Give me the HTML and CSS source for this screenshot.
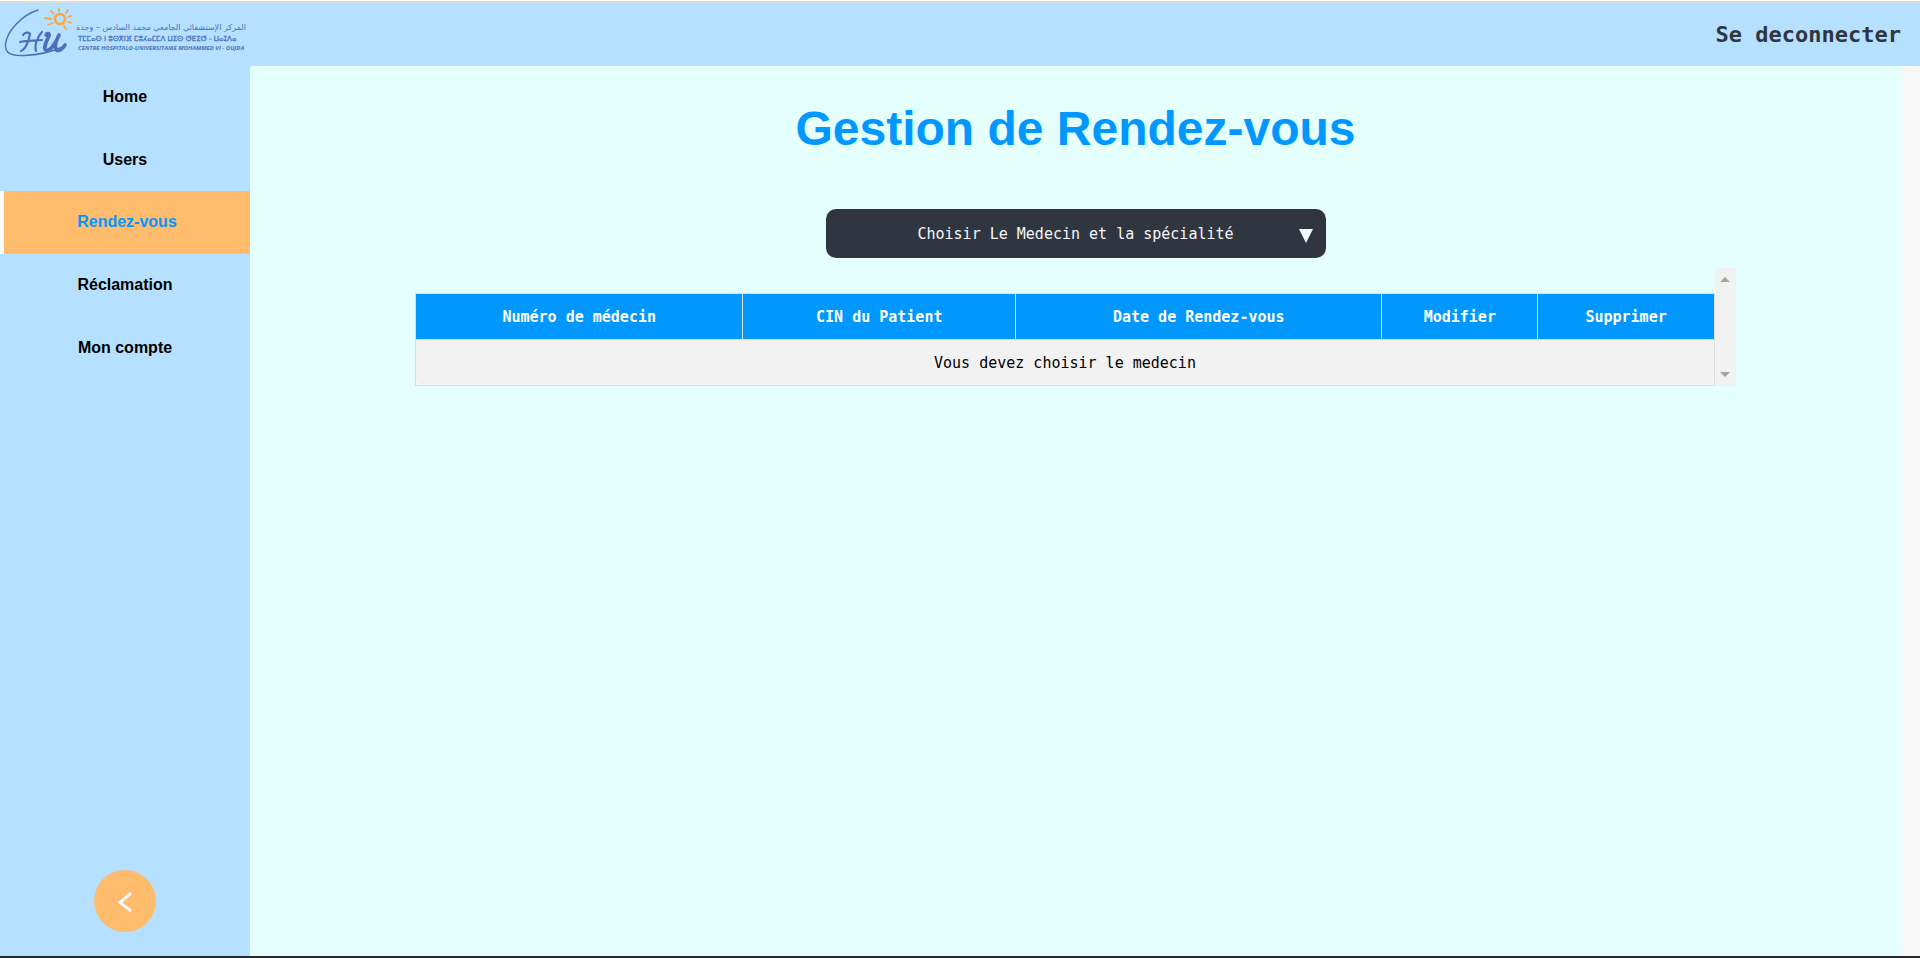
FILE: index.html
```html
<!DOCTYPE html>
<html lang="fr">
<head>
<meta charset="utf-8">
<title>Gestion de Rendez-vous</title>
<link rel="stylesheet" href="styles.css">
</head>
<body>
<header class="topbar">
  <a class="brand" href="#" aria-label="CHU Mohammed VI Oujda">
    <svg class="logo" viewBox="0 5 250 60" width="250" height="60" aria-hidden="true">
      <g fill="none" stroke="#4a72b8" stroke-linecap="round" stroke-linejoin="round">
        <path stroke-width="1.400" d="M38 10C22 15 7 31 5.500 44C4.500 54 12 56 24 55.500C38 55 54 51 65 46"/>
        <path stroke-width="2.200" d="M23 35C25 32 30 32 30 34C29 40 26 49 21 51M42 32C38 36 34 45 36 51M20 42C27 40 34 41 42 40"/>
        <path stroke-width="3.600" d="M46 35C47 33 50 33 49 36C46 42 43 48 46 50.500C50 51.500 56 43 59 35C56 41 54 48 57 50.500C60 51 63 48 65 45"/>
      </g>
      <g fill="none" stroke="#fba73c" stroke-linecap="round">
        <circle cx="60" cy="19" r="5" stroke-width="2.600"/>
        <path stroke-width="1.800" d="M59 9V11M51 11L53.500 13.500M68 10L66 13M45 18L51 19M48 25L53 23M68.500 17L71 16M68.500 22L71 23M64 26L66 29"/>
      </g>
      <text class="logo-ar" x="161" y="30" text-anchor="middle" direction="rtl">المركز الإستشفائي الجامعي محمد السادس – وجدة</text>
      <text class="logo-tz" x="78" y="41">Tⵎⵎⴰⵙ ⵏ ⵓⵙⴳⵏⴼ ⵎⵓⵃⴰⵎⵎⴷ ⵡⵉⵙ ⵚⴹⵉⵚ - ⵡⴰⵊⴷⴰ</text>
      <text class="logo-fr" x="78" y="50">CENTRE HOSPITALO-UNIVERSITAIRE MOHAMMED VI - OUJDA</text>
    </svg>
  </a>
  <a class="logout" href="#">Se deconnecter</a>
</header>
<div class="layout">
  <aside class="sidebar">
    <nav class="nav">
      <a href="#">Home</a>
      <a href="#">Users</a>
      <a class="active" href="#" aria-current="page">Rendez-vous</a>
      <a href="#">Réclamation</a>
      <a href="#">Mon compte</a>
    </nav>
    <button class="collapse" type="button" aria-label="Réduire le menu">
      <svg viewBox="0 0 14 20" width="14" height="20" aria-hidden="true"><path d="M13 1L2 10.500L13 19" fill="none" stroke="#f5f6fa" stroke-width="3"/></svg>
    </button>
  </aside>
  <main class="content">
    <h1>Gestion de Rendez-vous</h1>
    <div class="picker">
      <select aria-label="Choisir Le Medecin et la spécialité">
        <option>Choisir Le Medecin et la spécialité</option>
      </select>
      <svg class="picker-arrow" viewBox="0 0 14 14" width="14" height="14" aria-hidden="true"><path d="M0 0H14L7 14Z" fill="#f5f6fa"/></svg>
    </div>
    <div class="table-box">
      <table>
        <colgroup><col class="c-num"><col class="c-cin"><col class="c-date"><col class="c-mod"><col class="c-sup"></colgroup>
        <thead>
          <tr><th>Numéro de médecin</th><th>CIN du Patient</th><th>Date de Rendez-vous</th><th>Modifier</th><th>Supprimer</th></tr>
        </thead>
        <tbody>
          <tr><td colspan="5">Vous devez choisir le medecin</td></tr>
        </tbody>
      </table>
      <div class="scroll-track" aria-hidden="true"><i class="up"></i><i class="down"></i></div>
    </div>
  </main>
  <div class="gutter"></div>
</div>
</body>
</html>
```
FILE: styles.css
```css
* { box-sizing: border-box; }
body {
  margin: 0;
  min-height: 100vh;
  display: flex;
  flex-direction: column;
  font-family: "DejaVu Sans Mono", monospace;
  font-size: 15px;
  background: #e4fffc;
  border-top: 1px solid #fff;
  border-bottom: 2px solid #26282b;
}
a { text-decoration: none; color: inherit; }
.topbar {
  display: flex;
  justify-content: space-between;
  align-items: center;
  height: 65px;
  padding-right: 19px;
  background: #b5e0ff;
  border-top: 2px solid #d9dcdf;
}
.brand, .logo { display: block; }
.logo-ar { font: 8px "DejaVu Sans", sans-serif; fill: #4a72b8; }
.logo-tz { font: 7px "DejaVu Sans", sans-serif; fill: #4a72b8; stroke: #4a72b8; stroke-width: 0.3; }
.logo-fr { font: italic bold 6px "Open Sans", sans-serif; fill: #4a72b8; }
.logout { font-size: 22px; font-weight: bold; color: #2f3640; }
.layout { flex: 1; display: flex; }
.sidebar {
  width: 250px;
  flex-shrink: 0;
  display: flex;
  flex-direction: column;
  justify-content: space-between;
  align-items: center;
  padding-bottom: 24px;
  background: #b5e0ff;
}
.nav {
  width: 100%;
  height: 313px;
  display: grid;
  grid-template-rows: repeat(5, 1fr);
  font: bold 16px/20px "Liberation Sans", Arial, sans-serif;
  color: #000;
}
.nav a { display: flex; align-items: center; justify-content: center; }
.nav .active { background: #ffbc6c; color: #0097ff; border-left: 4px solid #fff; }
.collapse {
  width: 62px;
  height: 62px;
  padding: 4px 0 0;
  border: 0;
  border-radius: 50%;
  background: #ffbc6c;
}
.content {
  flex: 1;
  display: flex;
  flex-direction: column;
  align-items: center;
  padding-top: 35px;
}
h1 {
  margin: 0 0 52px;
  font: bold 48px/56px "Liberation Sans", Arial, sans-serif;
  color: #0097ff;
}
.picker { position: relative; width: 500px; max-width: 90%; }
select {
  appearance: none;
  display: block;
  width: 100%;
  height: 49px;
  padding: 0 16px;
  border: 0;
  border-radius: 10px;
  background: #2f3640;
  color: #f5f6fa;
  font: inherit;
  text-align: center;
  text-align-last: center;
}
.picker-arrow { position: absolute; right: 13px; top: 20px; pointer-events: none; }
.table-box { display: flex; width: 80%; margin-top: 10px; }
table {
  flex: 1;
  margin-top: 25px;
  table-layout: fixed;
  border-collapse: collapse;
  text-align: center;
}
.c-num { width: 25.2%; }
.c-cin { width: 21%; }
.c-date { width: 28.2%; }
.c-mod { width: 12%; }
.c-sup { width: 13.6%; }
th, td { height: 46px; padding: 0 12px; border: 1px solid #ddd; }
th { background: #0097ff; color: #fff; }
td { background: #f2f2f2; color: #000; border-radius: 0 0 8px 8px; }
.scroll-track {
  width: 21px;
  display: flex;
  flex-direction: column;
  justify-content: space-between;
  align-items: center;
  padding: 9px 0;
  background: #f1f1f1;
}
.up, .down { border: 5px solid transparent; }
.up { border-top: 0; border-bottom-color: #a3a3a3; }
.down { border-bottom: 0; border-top-color: #a3a3a3; }
.gutter { width: 19px; background: #f8f8f8; }
```
